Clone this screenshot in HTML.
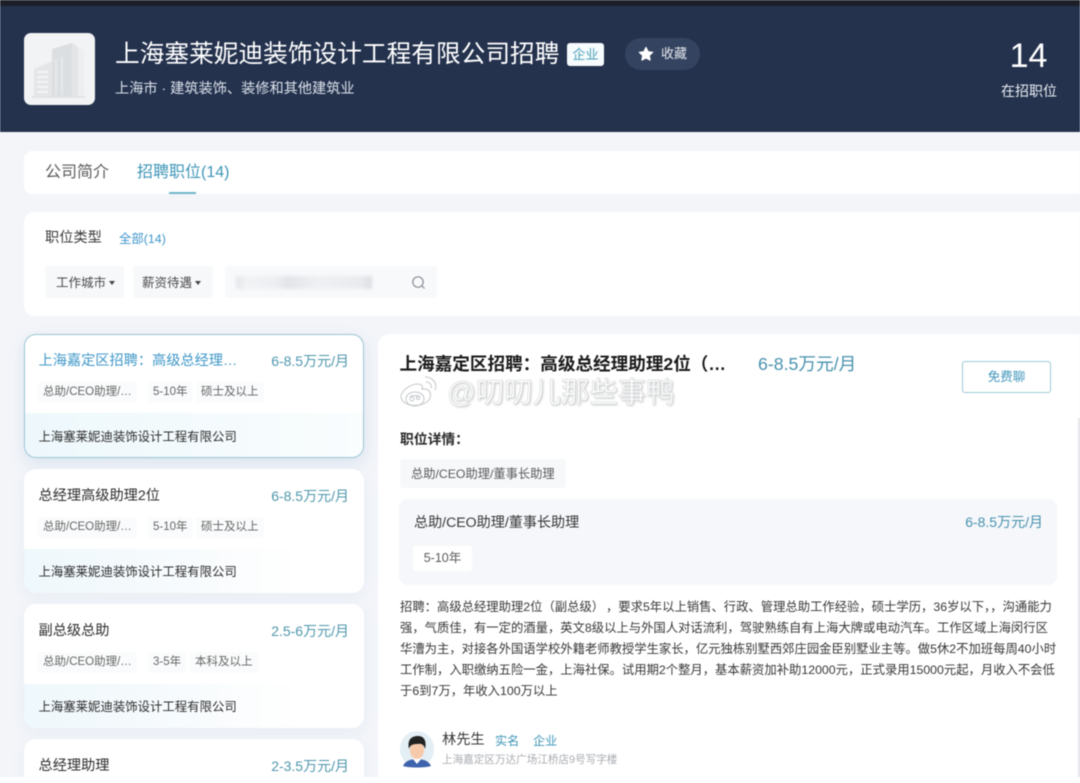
<!DOCTYPE html>
<html lang="zh-CN">
<head>
<meta charset="utf-8">
<title>上海塞莱妮迪装饰设计工程有限公司招聘</title>
<style>
*{box-sizing:border-box;margin:0;padding:0}
html,body{width:1080px;height:783px;overflow:hidden;background:#f3f5f9}
body{font-family:"Liberation Sans","Noto Sans CJK SC",sans-serif;color:#333}
#w{position:absolute;left:0;top:0;width:1080px;height:783px;overflow:hidden;filter:blur(.4px)}
.a{position:absolute;white-space:nowrap}
.card{position:absolute;left:24px;width:340px;height:124px;background:#fff;border-radius:12px;overflow:hidden;box-shadow:0 4px 14px rgba(190,205,225,.18)}
.card .foot{position:absolute;left:0;right:0;bottom:0;height:44px;background:linear-gradient(90deg,#eff8fc 0,#f7fbfd 45%,#fff 80%)}
.card .t{position:absolute;left:14.5px;top:16.5px;font-size:14.2px;line-height:20px;color:#2e2e2e;white-space:nowrap}
.card .s{position:absolute;right:15px;top:16.5px;font-size:14px;line-height:20px;color:#4f97ad;white-space:nowrap}
.card .c{position:absolute;left:14.5px;top:93.5px;font-size:12.4px;line-height:18px;color:#2e2e2e;white-space:nowrap}
.tag{position:absolute;top:47.5px;height:21px;line-height:21px;font-size:11.5px;color:#666;background:#fafbfc;padding:0 5px;border-radius:3px;white-space:nowrap}
</style>
</head>
<body>
<div id="w">

<div class="a" style="left:0;top:0;width:1080px;height:6px;background:#1c1f27"></div>
<div class="a" style="left:0;top:6px;width:1080px;height:126px;background:#24324e"></div>
<div class="a" style="left:0;top:132px;width:1080px;height:651px;background:#f3f5f9"></div>

<div class="a" style="left:24px;top:33px;width:71px;height:72px;background:#f1f3f5;border-radius:7px"></div>
<svg class="a" style="left:24px;top:33px" width="71" height="72" viewBox="0 0 71 72">
<path d="M10 64V36L28 28V64Z" fill="#e4e6e8"/>
<path d="M28 28V16L48 10V64H28Z" fill="#dcdfe1"/>
<path d="M48 10L54 14V64H48Z" fill="#e3e5e7"/>
<path d="M54 14L60 17V64H54Z" fill="#eceef0"/>
<path d="M13 39H24M13 44H24M13 49H24M13 54H24M13 59H24" stroke="#f3f4f5" stroke-width="2"/>
<path d="M32 26V62M38 24V62" stroke="#e6e8ea" stroke-width="2"/>
<path d="M8 64H61" stroke="#e1e3e5" stroke-width="2"/>
</svg>

<div class="a" style="left:115px;top:39px;font-size:24.7px;line-height:32px;color:#fff">上海塞莱妮迪装饰设计工程有限公司招聘</div>
<div class="a" style="left:567px;top:43px;width:37px;height:23px;background:#f6fbfd;border-radius:3px;color:#4a9fb8;font-size:13px;line-height:23px;text-align:center">企业</div>
<div class="a" style="left:625px;top:38px;width:75px;height:32px;border-radius:16px;background:#344360"></div>
<svg class="a" style="left:638px;top:46px" width="16" height="16" viewBox="0 0 17 17">
<path d="M8.5 1.5L10.7 6L15.6 6.7L12 10.1L12.9 15L8.5 12.7L4.1 15L5 10.1L1.4 6.7L6.3 6Z" fill="#fff" stroke="#fff" stroke-width="1.2" stroke-linejoin="round"/>
</svg>
<div class="a" style="left:661px;top:45px;font-size:13px;line-height:18px;color:#e6e9ee">收藏</div>
<div class="a" style="left:115px;top:79px;font-size:14.2px;line-height:20px;color:#dde3ec">上海市 · 建筑装饰、装修和其他建筑业</div>
<div class="a" style="left:999.5px;top:36px;width:58px;text-align:center;font-size:34px;line-height:40px;color:#fff">14</div>
<div class="a" style="left:1001px;top:81px;font-size:14px;line-height:20px;color:#eaeef3">在招职位</div>

<div class="a" style="left:24px;top:151px;width:1056px;height:43px;background:#fff;border-radius:8px 0 0 8px"></div>
<div class="a" style="left:45px;top:162px;font-size:16px;line-height:22px;color:#5a5a5a">公司简介</div>
<div class="a" style="left:137px;top:162px;font-size:16px;line-height:22px;color:#4096b8">招聘职位(14)</div>
<div class="a" style="left:169px;top:192px;width:27px;height:2px;background:#6fb6c9"></div>

<div class="a" style="left:24px;top:212px;width:1056px;height:104px;background:#fff;border-radius:10px 0 0 10px"></div>
<div class="a" style="left:45px;top:228px;font-size:14.2px;line-height:20px;color:#3c3c3c">职位类型</div>
<div class="a" style="left:119px;top:230px;font-size:12.4px;line-height:18px;color:#4097cc">全部(14)</div>

<div class="a" style="left:45px;top:266px;width:79px;height:32px;background:#f7f8fa;border-radius:3px"></div>
<div class="a" style="left:56px;top:274px;font-size:12.5px;line-height:18px;color:#4a4a4a">工作城市</div>
<div class="a" style="left:109px;top:281px;width:0;height:0;border-left:3px solid transparent;border-right:3px solid transparent;border-top:4px solid #444"></div>
<div class="a" style="left:133px;top:266px;width:80px;height:32px;background:#f7f8fa;border-radius:3px"></div>
<div class="a" style="left:142px;top:274px;font-size:12.5px;line-height:18px;color:#4a4a4a">薪资待遇</div>
<div class="a" style="left:195px;top:281px;width:0;height:0;border-left:3px solid transparent;border-right:3px solid transparent;border-top:4px solid #444"></div>
<div class="a" style="left:225px;top:266px;width:212px;height:32px;background:#f8f9fb;border-radius:3px"></div>
<div class="a" style="left:236px;top:276px;width:136px;height:13px;background:linear-gradient(90deg,#e4e6ea,#f2f3f5 8%,#eceef1 30%,#e2e4e8 38%,#eff0f3 60%,#e9ebee 92%,#dcdee2 100%);filter:blur(1.5px)"></div>
<svg class="a" style="left:411px;top:275px" width="15" height="15" viewBox="0 0 15 15" fill="none" stroke="#8a8f96" stroke-width="1.2">
<circle cx="7" cy="7" r="5.2"/><path d="M11 11L13.5 13.5"/>
</svg>

<!-- job cards -->
<div class="card" style="top:334px;height:124px;border:1px solid #9cc6d3;box-shadow:0 5px 14px rgba(170,195,220,.35);background:#fff">
  <div class="foot" style="background:linear-gradient(90deg,#eef8fc 0,#f5fbfd 60%,#fafdfe 100%)"></div>
  <div class="t" style="left:13.5px;top:15.5px;color:#4098c8">上海嘉定区招聘：高级总经理…</div>
  <div class="s" style="right:14px;top:15.5px">6-8.5万元/月</div>
  <span class="tag" style="left:13px;top:46.5px">总助/CEO助理/…</span>
  <span class="tag" style="left:123px;top:46.5px">5-10年</span>
  <span class="tag" style="left:171px;top:46.5px">硕士及以上</span>
  <div class="c" style="left:13.5px;top:92.5px">上海塞莱妮迪装饰设计工程有限公司</div>
</div>

<div class="card" style="top:469px">
  <div class="foot"></div>
  <div class="t">总经理高级助理2位</div>
  <div class="s">6-8.5万元/月</div>
  <span class="tag" style="left:14px">总助/CEO助理/…</span>
  <span class="tag" style="left:124px">5-10年</span>
  <span class="tag" style="left:172px">硕士及以上</span>
  <div class="c">上海塞莱妮迪装饰设计工程有限公司</div>
</div>

<div class="card" style="top:604px">
  <div class="foot"></div>
  <div class="t">副总级总助</div>
  <div class="s">2.5-6万元/月</div>
  <span class="tag" style="left:14px">总助/CEO助理/…</span>
  <span class="tag" style="left:124px">3-5年</span>
  <span class="tag" style="left:166px">本科及以上</span>
  <div class="c">上海塞莱妮迪装饰设计工程有限公司</div>
</div>

<div class="card" style="top:739px;height:38px;border-radius:12px 12px 0 0">
  <div class="t">总经理助理</div>
  <div class="s">2-3.5万元/月</div>
</div>

<!-- detail panel -->
<div class="a" style="left:378px;top:334px;width:702px;height:443px;background:#fff;border-radius:12px 0 0 0"></div>
<div class="a" style="left:399.5px;top:352px;font-size:17.6px;line-height:24px;font-weight:bold;color:#1a1a1a">上海嘉定区招聘：高级总经理助理2位（…</div>
<div class="a" style="left:758px;top:352px;font-size:17.7px;line-height:24px;color:#4892ae">6-8.5万元/月</div>
<div class="a" style="left:962px;top:361px;width:89px;height:32px;border:1px solid #a0c8d6;border-radius:3px;color:#4096bc;font-size:12.5px;line-height:30px;text-align:center">免费聊</div>

<svg class="a" style="left:400px;top:376px" width="42" height="34" viewBox="0 0 42 34" fill="none" stroke="#c4c7ca" stroke-width="1">
<path d="M1 21C1 15 10 8 18 8C22 8 23 11 22 13C28 12 32 16 30 22C27 31 3 33 1 21Z" fill="#fff"/>
<ellipse cx="15" cy="23" rx="9" ry="7"/><circle cx="12" cy="23" r="2"/><circle cx="18" cy="22" r="1.6"/>
<path d="M10 21C12 19 18 19 20 21" />
<path d="M25 1C32 1 38 7 35 14M26 6C30 6 32 9 31 12"/>
</svg>
<div class="a" style="left:447px;top:377px;font-size:28.4px;line-height:32px;color:#fff;-webkit-text-stroke:.5px #cfd2d5;text-shadow:1px 1px 2px rgba(120,120,120,.45)">@叨叨儿那些事鸭</div>

<div class="a" style="left:400px;top:430px;font-size:13.8px;line-height:20px;font-weight:bold;color:#2a2a2a">职位详情：</div>
<div class="a" style="left:400px;top:459px;width:166px;height:29px;background:#f7f8fa;border-radius:3px"></div>
<div class="a" style="left:411px;top:465px;font-size:12.25px;line-height:18px;color:#5a5a5a">总助/CEO助理/董事长助理</div>

<div class="a" style="left:399px;top:499px;width:658px;height:86px;background:#f5f7fa;border-radius:9px"></div>
<div class="a" style="left:414px;top:512px;font-size:14.1px;line-height:20px;color:#383838">总助/CEO助理/董事长助理</div>
<div class="a" style="right:37px;top:512px;font-size:14px;line-height:20px;color:#4892ae">6-8.5万元/月</div>
<div class="a" style="left:413px;top:546px;width:59px;height:25px;background:#fff;border-radius:3px;font-size:12.5px;line-height:25px;text-align:center;color:#5a5a5a">5-10年</div>

<div class="a" style="left:400px;top:597px;font-size:12.33px;line-height:21px;color:#383838">
招聘：高级总经理助理2位（副总级）<span style="margin-left:8px">，</span>要求5年以上销售、行政、管理总助工作经验，硕士学历，36岁以下，，沟通能力<br>
强，气质佳，有一定的酒量，英文8级以上与外国人对话流利，驾驶熟练自有上海大牌或电动汽车。工作区域上海闵行区<br>
华漕为主，对接各外国语学校外籍老师教授学生家长，亿元独栋别墅西郊庄园金臣别墅业主等。做5休2不加班每周40小时<br>
工作制，入职缴纳五险一金，上海社保。试用期2个整月，基本薪资加补助12000元，正式录用15000元起，月收入不会低<br>
于6到7万，年收入100万以上
</div>

<svg class="a" style="left:399px;top:730px" width="36" height="38" viewBox="0 0 36 38">
<ellipse cx="18" cy="19" rx="17" ry="18" fill="#e3eef5"/>
<path d="M4 36C6 31 12 29 18 29C24 29 30 31 32 36C27 38 9 38 4 36Z" fill="#3e63ad"/>
<path d="M13 28L18 34L23 28Z" fill="#fff"/>
<ellipse cx="18" cy="20" rx="7" ry="9" fill="#f7c9ab"/>
<path d="M10 19C8 9 13 6 19 6C25 6 28 11 26 19C25 15 23 13 18 14C14 14 11 15 10 19Z" fill="#222"/>
</svg>
<div class="a" style="left:442px;top:730px;font-size:14.2px;line-height:20px;color:#383838">林先生</div>
<div class="a" style="left:495px;top:731px;font-size:12.2px;line-height:20px;color:#4096b8">实名</div>
<div class="a" style="left:533px;top:731px;font-size:12.2px;line-height:20px;color:#4096b8">企业</div>
<div class="a" style="left:442px;top:752px;font-size:10.6px;line-height:16px;color:#a8abb0">上海嘉定区万达广场江桥店9号写字楼</div>

<div class="a" style="left:1078px;top:418px;width:2px;height:359px;background:#e4e6ea"></div>
<div class="a" style="left:0;top:777px;width:1080px;height:6px;background:#fff"></div>

</div>
</body>
</html>
